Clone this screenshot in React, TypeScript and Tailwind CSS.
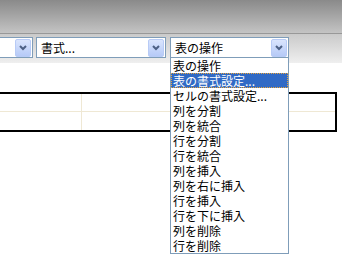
import React from 'react';

const items = [
  '表の操作',
  '表の書式設定...',
  'セルの書式設定...',
  '列を分割',
  '列を統合',
  '行を分割',
  '行を統合',
  '列を挿入',
  '列を右に挿入',
  '行を挿入',
  '行を下に挿入',
  '列を削除',
  '行を削除',
];

function ArrowButton() {
  return (
    <div className="absolute right-px top-px w-[16px] h-[18px] rounded-[2px] border border-[#b8cbf6] bg-gradient-to-b from-[#dae5fd] to-[#b6caf7] flex items-center justify-center">
      <svg width="8" height="6" viewBox="0 0 8 6">
        <polyline points="1,1 4,4 7,1" fill="none" stroke="#4d6185" strokeWidth="2" />
      </svg>
    </div>
  );
}

function Combo({ label, className }: { label: string; className: string }) {
  return (
    <div className={`relative h-[21px] border border-[#7f9db9] bg-white shrink-0 ${className}`}>
      <span className="absolute left-[4px] top-[2px] h-[15px] overflow-hidden text-[12px] leading-[15px] text-black whitespace-nowrap">{label}</span>
      <ArrowButton />
    </div>
  );
}

export default function App() {
  return (
    <div
      className="relative w-[342px] h-[262px] overflow-hidden bg-white"
      style={{ fontFamily: '"Noto Sans CJK JP", "Liberation Sans", sans-serif' }}
    >
      <div className="h-[33px] bg-gradient-to-b from-[#8a8a8a] to-[#c4c4c4]" />
      <div className="h-px bg-[#989898]" />
      <div className="h-[29px] bg-gradient-to-b from-[#cacaca] to-[#efefef] pt-[3px] flex">
        <Combo label="" className="w-[120px] ml-[-87px]" />
        <Combo label="書式..." className="w-[130px] ml-[3px]" />
        <Combo label="表の操作" className="w-[119px] ml-[4px]" />
      </div>

      <div className="mt-[29px] ml-[-2px] w-[339px] h-[40px] border-2 border-black grid grid-cols-[82px_1fr] grid-rows-[18px_1fr]">
        <div className="border-r border-b border-[#efe8d4]" />
        <div className="border-b border-[#efe8d4]" />
        <div className="border-r border-[#efe8d4]" />
        <div />
      </div>

      <div className="absolute left-[170px] top-[57px] w-[119px] border border-[#7f9db9] bg-white">
        {items.map((it, i) => (
          <div
            key={it}
            className={
              i === 1
                ? 'h-[15px] overflow-hidden leading-[13px] text-[12px] pl-px bg-[#316ac5] text-white border border-dotted border-[#e8a43c] whitespace-nowrap'
                : 'h-[15px] overflow-hidden leading-[15px] text-[12px] pl-[2px] text-black whitespace-nowrap'
            }
          >
            {it}
          </div>
        ))}
      </div>
    </div>
  );
}
